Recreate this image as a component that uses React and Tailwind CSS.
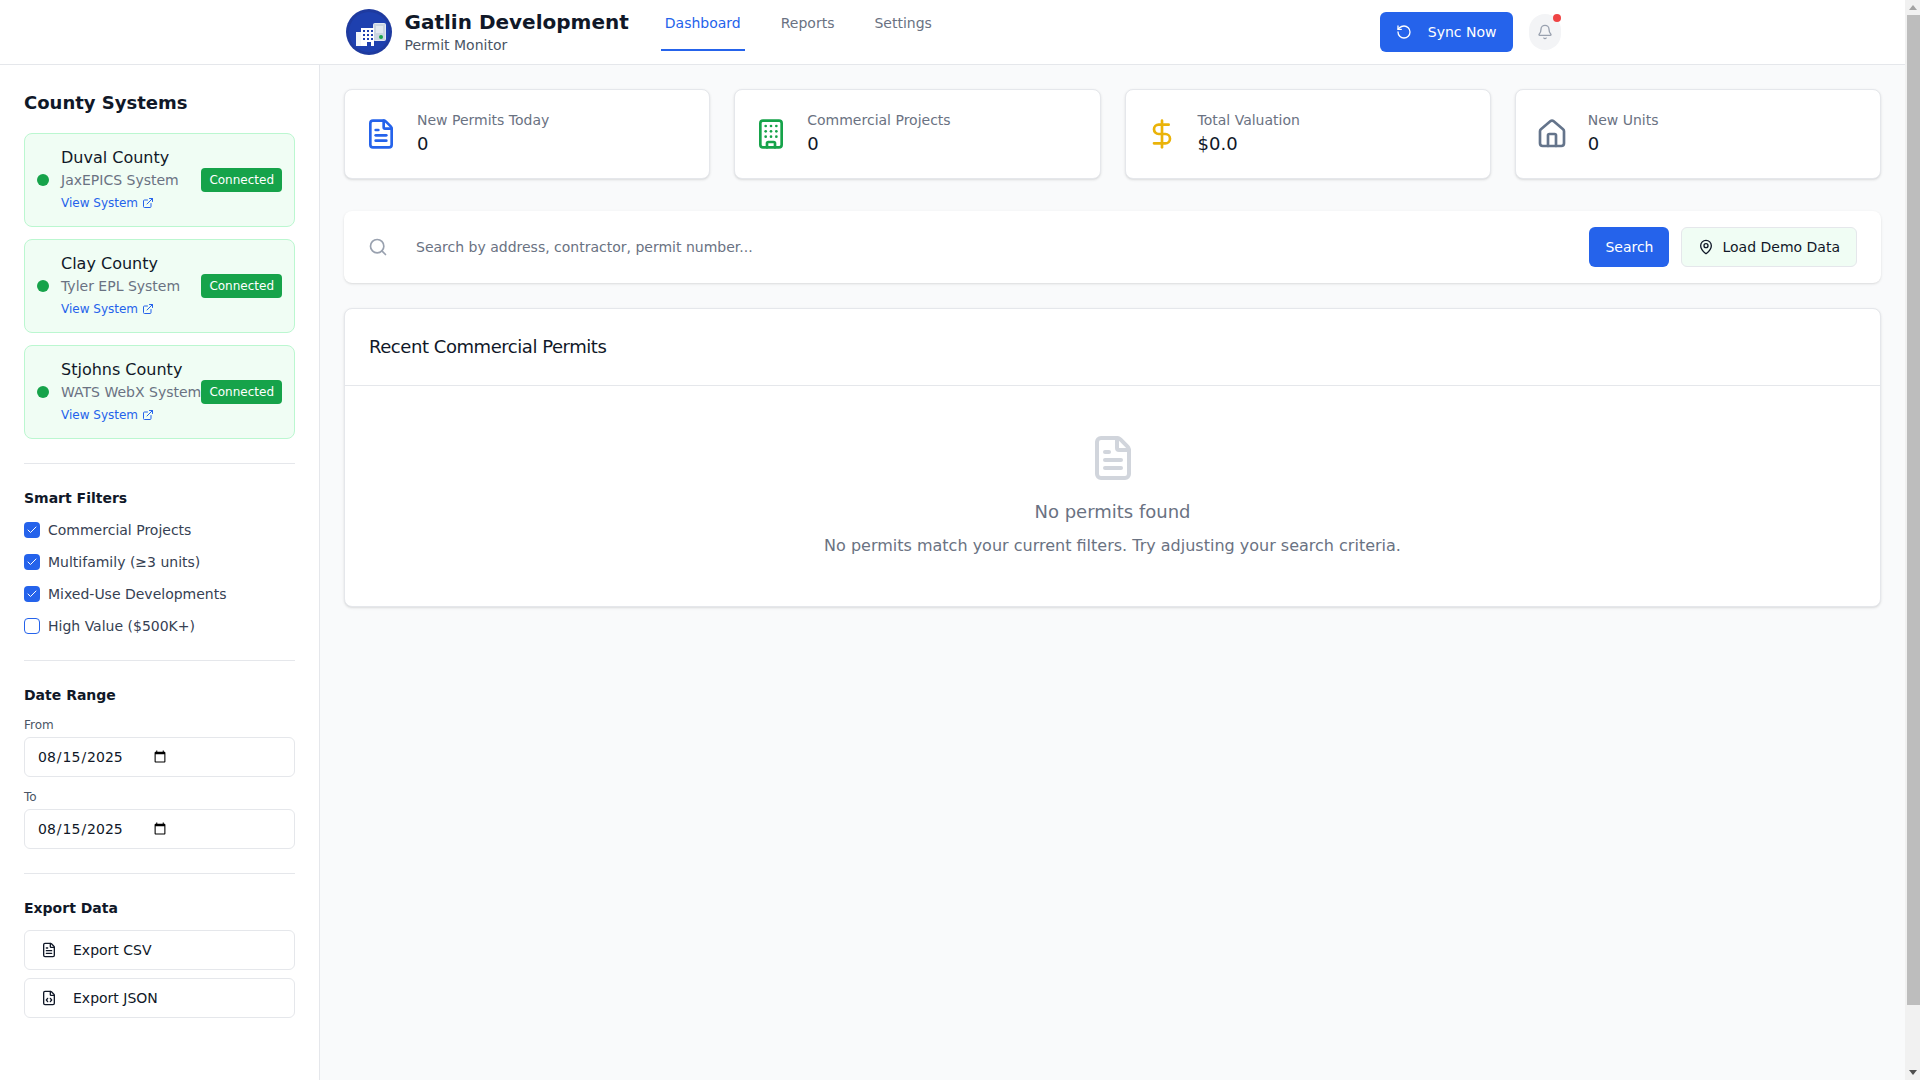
import {
  Bell,
  Building,
  Check,
  DollarSign,
  ExternalLink,
  FileCode,
  FileText,
  House,
  MapPin,
  RotateCcw,
  Search,
} from "lucide-react";

const counties = [
  { name: "Duval County", system: "JaxEPICS System" },
  { name: "Clay County", system: "Tyler EPL System" },
  { name: "Stjohns County", system: "WATS WebX System" },
];

const filters = [
  { label: "Commercial Projects", checked: true },
  { label: "Multifamily (≥3 units)", checked: true },
  { label: "Mixed-Use Developments", checked: true },
  { label: "High Value ($500K+)", checked: false },
];

function Logo() {
  return (
    <svg viewBox="-1 -1 48 48" className="w-12 h-12 shrink-0">
      <circle cx="23" cy="23" r="23" fill="#1e3a9f" />
      <circle cx="23" cy="23" r="20" fill="#1e40af" />
      <rect x="27.5" y="14.5" width="12" height="17" rx="1" fill="#cbd5e1" stroke="#e2e8f0" />
      <rect x="30" y="17" width="7" height="7" fill="#e2e8f0" />
      <circle cx="35" cy="28" r="2" fill="#16a34a" />
      <rect x="10" y="23" width="6" height="14" fill="#f1f5f9" />
      <rect x="15" y="19" width="13" height="18" fill="#ffffff" />
      <g fill="#1e40af">
        <rect x="17" y="21" width="2" height="2" />
        <rect x="21" y="21" width="2" height="2" />
        <rect x="25" y="21" width="2" height="2" />
        <rect x="17" y="25" width="2" height="2" />
        <rect x="21" y="25" width="2" height="2" />
        <rect x="25" y="25" width="2" height="2" />
        <rect x="17" y="29" width="2" height="2" />
        <rect x="21" y="29" width="2" height="2" />
        <rect x="25" y="29" width="2" height="2" />
        <rect x="21" y="33" width="4" height="4" />
      </g>
    </svg>
  );
}

function Header() {
  return (
    <header className="bg-white border-b border-gray-200">
      <div className="max-w-7xl mx-auto px-8 py-2 flex items-start h-16">
        <div className="flex items-center">
          <Logo />
          <div className="ml-3">
            <h1 className="text-xl font-bold leading-7 text-gray-900">
              Gatlin Development
            </h1>
            <p className="-mt-px mb-px text-sm text-gray-600">Permit Monitor</p>
          </div>
        </div>
        <nav className="flex gap-8 ml-8 pt-[5px]">
          <a href="#" className="px-1 pb-4 text-sm text-[#2563eb] border-b-2 border-[#2563eb]">
            Dashboard
          </a>
          <a href="#" className="px-1 pb-4 text-sm text-gray-500 border-b-2 border-transparent">
            Reports
          </a>
          <a href="#" className="px-1 pb-4 text-sm text-gray-500 border-b-2 border-transparent">
            Settings
          </a>
        </nav>
        <div className="ml-auto flex items-center gap-4 h-12">
          <button className="flex items-center h-10 px-4 bg-[#2563eb] text-white text-sm rounded-md">
            <RotateCcw size={16} className="mr-4" />
            Sync Now
          </button>
          <button className="relative flex items-center justify-center w-8 h-9 rounded-full bg-gray-100 text-gray-400">
            <Bell size={16} />
            <span className="absolute top-0 right-0 w-2 h-2 rounded-full bg-[#ef4444]"></span>
          </button>
        </div>
      </div>
    </header>
  );
}

function CountyCard({ name, system }) {
  return (
    <div className="flex items-center justify-between p-3 bg-[#f0fdf4] border border-[#bbf7d0] rounded-lg">
      <div className="flex items-center">
        <div className="w-3 h-3 mr-3 rounded-full bg-[#16a34a] shrink-0"></div>
        <div>
          <p className="text-base text-gray-900">{name}</p>
          <p className="text-sm text-gray-500 whitespace-nowrap">{system}</p>
          <div>
            <a href="#" className="inline-flex items-center text-xs text-[#2563eb]">
              View System
              <ExternalLink size={12} className="ml-1" />
            </a>
          </div>
        </div>
      </div>
      <span className="shrink-0 px-2 py-1 bg-[#16a34a] text-white text-xs rounded">
        Connected
      </span>
    </div>
  );
}

function FilterRow({ label, checked }) {
  return (
    <label className="flex items-center">
      {checked ? (
        <span className="flex items-center justify-center w-4 h-4 rounded bg-[#2563eb] text-white">
          <Check size={12} strokeWidth={2} />
        </span>
      ) : (
        <span className="w-4 h-4 rounded border border-[#2563eb] bg-white"></span>
      )}
      <span className="ml-2 text-sm text-gray-700">{label}</span>
    </label>
  );
}

function DateField({ label }) {
  return (
    <div>
      <label className="block mb-1 text-xs text-gray-600">{label}</label>
      <input
        type="date"
        defaultValue="2025-08-15"
        className="w-full h-10 px-3 text-sm text-gray-900 bg-white border border-gray-200 rounded-md [&::-webkit-datetime-edit]:flex-none"
      />
    </div>
  );
}

function Sidebar() {
  return (
    <aside className="w-80 shrink-0 p-6 bg-white border-r border-gray-200">
      <h2 className="mb-4 text-lg font-bold text-gray-900">County Systems</h2>
      <div className="space-y-3">
        {counties.map((c) => (
          <CountyCard key={c.name} {...c} />
        ))}
      </div>

      <div className="mt-6 pt-6 border-t border-gray-200">
        <h3 className="mb-3 text-sm font-bold text-gray-900">Smart Filters</h3>
        <div className="space-y-3">
          {filters.map((f) => (
            <FilterRow key={f.label} {...f} />
          ))}
        </div>
      </div>

      <div className="mt-6 pt-6 border-t border-gray-200">
        <h3 className="mb-3 text-sm font-bold text-gray-900">Date Range</h3>
        <div className="space-y-3">
          <DateField label="From" />
          <DateField label="To" />
        </div>
      </div>

      <div className="mt-6 pt-6 border-t border-gray-200">
        <h3 className="mb-3 text-sm font-bold text-gray-900">Export Data</h3>
        <div className="space-y-2">
          <button className="flex items-center w-full h-10 px-4 text-sm text-gray-900 bg-white border border-gray-200 rounded-md">
            <FileText size={16} className="mr-4" />
            Export CSV
          </button>
          <button className="flex items-center w-full h-10 px-4 text-sm text-gray-900 bg-white border border-gray-200 rounded-md">
            <FileCode size={16} className="mr-4" />
            Export JSON
          </button>
        </div>
      </div>
    </aside>
  );
}

function StatCard({ icon: Icon, color, label, value }) {
  return (
    <div className="flex items-center p-5 bg-white border border-gray-200 rounded-lg shadow">
      <Icon size={32} className={color} />
      <div className="ml-5">
        <p className="text-sm text-gray-500">{label}</p>
        <p className="text-lg text-gray-900">{value}</p>
      </div>
    </div>
  );
}

// the reference has the browser's scrollbar in frame, headless hides the real one
function ScrollBar() {
  return (
    <div className="w-[15px] shrink-0 flex flex-col bg-[#f1f1f1]">
      <div className="h-[15px] flex items-center justify-center">
        <div className="w-0 h-0 border-x-4 border-x-transparent border-b-[5px] border-b-[#a3a3a3]"></div>
      </div>
      <div className="h-[990px] ml-[2px] bg-[#bdbdbd]"></div>
      <div className="flex-1 flex items-end justify-center pb-[5px]">
        <div className="w-0 h-0 border-x-4 border-x-transparent border-t-[5px] border-t-[#505050]"></div>
      </div>
    </div>
  );
}

export default function App() {
  return (
    <div className="flex h-screen overflow-hidden font-['DejaVu_Sans',sans-serif]">
      <div className="flex-1 min-w-0 bg-gray-50">
        <Header />
        <div className="flex min-h-screen">
          <Sidebar />
          <main className="flex-1 min-w-0 p-6">
            {/* Stats */}
            <div className="grid grid-cols-4 gap-6 mb-8">
              <StatCard icon={FileText} color="text-[#2563eb]" label="New Permits Today" value="0" />
              <StatCard icon={Building} color="text-[#16a34a]" label="Commercial Projects" value="0" />
              <StatCard icon={DollarSign} color="text-[#eab308]" label="Total Valuation" value="$0.0" />
              <StatCard icon={House} color="text-[#64748b]" label="New Units" value="0" />
            </div>

            {/* Search */}
            <div className="flex items-center gap-3 px-6 py-4 mb-[25px] bg-white rounded-lg shadow">
              <Search size={20} className="text-gray-400 shrink-0" />
              <input
                type="text"
                placeholder="Search by address, contractor, permit number..."
                className="flex-1 px-4 h-10 text-sm text-gray-900 placeholder:text-gray-500 outline-none"
              />
              <button className="h-10 px-4 bg-[#2563eb] text-white text-sm rounded-md">
                Search
              </button>
              <button className="flex items-center h-10 px-4 text-sm text-gray-900 bg-[#f0fdf4] border border-gray-200 rounded-md">
                <MapPin size={16} className="mr-2" />
                Load Demo Data
              </button>
            </div>

            {/* Results */}
            <div className="bg-white border border-gray-200 rounded-lg shadow">
              <div className="p-6 border-b border-gray-200">
                <h2 className="text-lg tracking-tight text-gray-900">Recent Commercial Permits</h2>
              </div>
              <div className="p-12 text-center">
                <FileText size={48} className="mx-auto mb-4 text-gray-300" />
                <h3 className="mb-2 text-lg text-gray-500">No permits found</h3>
                <p className="text-base text-gray-500">
                  No permits match your current filters. Try adjusting your search criteria.
                </p>
              </div>
            </div>
          </main>
        </div>
      </div>
      <ScrollBar />
    </div>
  );
}
